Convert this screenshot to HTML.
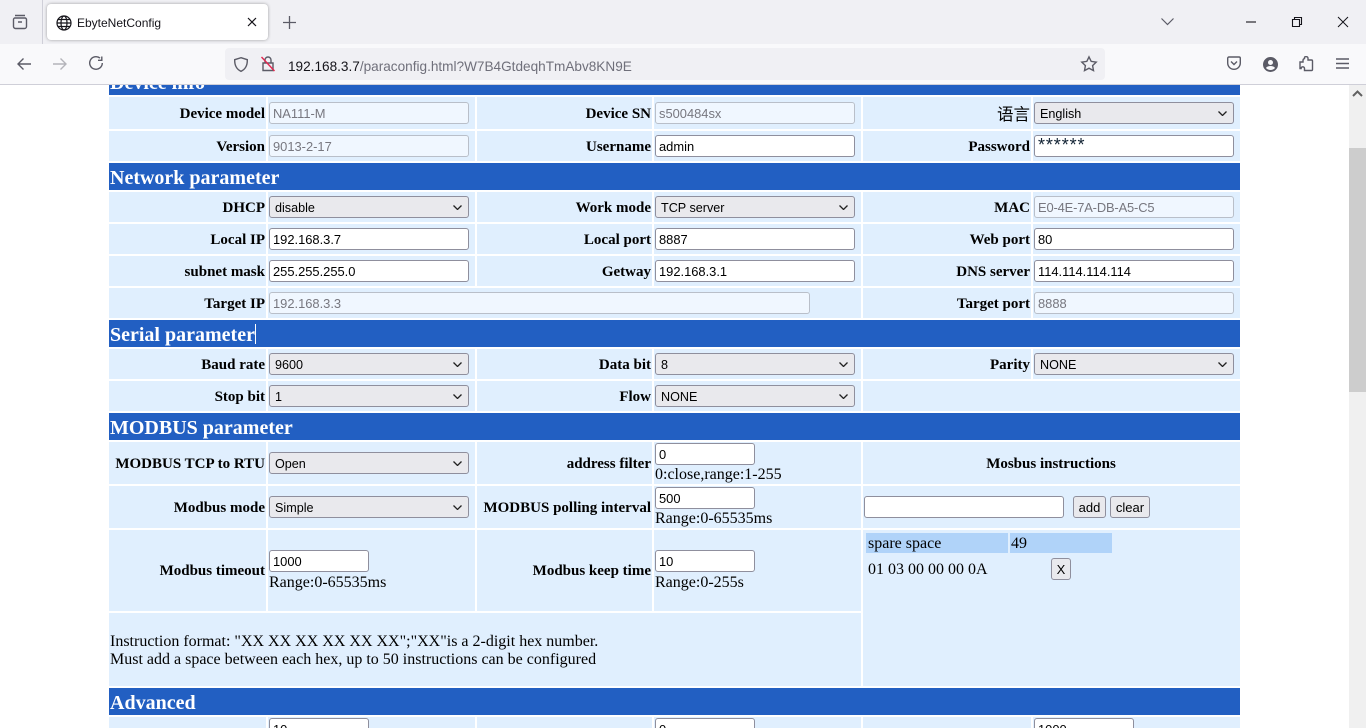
<!DOCTYPE html>
<html lang="en"><head><meta charset="utf-8"><title>EbyteNetConfig</title>
<style>
*{box-sizing:border-box}
html,body{margin:0;padding:0;width:1366px;height:728px;overflow:hidden;background:#fff}
body{position:relative;font-family:"Liberation Serif","Noto Serif CJK SC",serif;font-size:16px;color:#000}
#title{position:absolute;left:0;top:0;width:1366px;height:44px;background:#f0f0f4}
#tb{position:absolute;left:0;top:44px;width:1366px;height:41px;background:#f9f9fb;border-bottom:1px solid #cfcfd8}
#sep{position:absolute;left:42px;top:0;width:1px;height:44px;background:#cfcfd8}
#tab{position:absolute;left:47px;top:4px;width:221px;height:36px;background:#fff;border-radius:4px;box-shadow:0 0 3px rgba(0,0,0,.35)}
#tabt{position:absolute;left:30px;top:1px;font:12px/37px "Liberation Sans",sans-serif;color:#15141a}
#url{position:absolute;left:225px;top:4px;width:880px;height:32px;background:#f0f0f4;border-radius:4px}
#urlt{position:absolute;left:63px;top:2px;font:13.6px/33px "Liberation Sans",sans-serif;color:#6f6f7a;white-space:nowrap}
#urlt b{font-weight:400;color:#15141a}
svg.i{position:absolute;overflow:visible;fill:none;stroke:#5b5b66;stroke-width:1.4}
#page{position:absolute;left:0;top:85px;width:1349px;height:643px;overflow:hidden;background:#fff}
#in{position:absolute;left:0;top:-85px;width:1349px;height:728px;overflow:hidden}
#sb{position:absolute;left:1349px;top:85px;width:17px;height:643px;background:#f0f0f0}
#th{position:absolute;left:0;top:63px;width:17px;height:244px;background:#cdcdcd}
.h{position:absolute;left:109px;width:1131px;height:27px;background:#225fc2;color:#fff;font-weight:700;font-size:20px;line-height:31px;padding-left:1px;white-space:nowrap;overflow:hidden}
.c{position:absolute;background:#e0effe;display:flex;align-items:center;white-space:nowrap}
.l{justify-content:flex-end;padding-right:1px;padding-top:2px;font-weight:700;font-size:15px}
.f,.s,.b{position:absolute;margin:0;height:22px;width:200px;border:1px solid #8f8f9d;border-radius:3px;background:#fff;color:#000;font:12.9px "Liberation Sans",sans-serif;padding:1px 3px 0;outline:0}
.f.n{width:100px}
.f[disabled]{background:#f0f7ff;border-color:#b9bfc9;color:#77777f}
.s{-webkit-appearance:none;appearance:none;background:#e9e9ed;padding:2px 0 0 5px;font-size:12.6px}
.b{background:#e9e9ed;padding:0;text-align:center;font-size:13px;color:#000}
.v{position:absolute;left:0;top:0;width:9px;height:5px;fill:none;stroke:#222;stroke-width:1.3}
.t{position:absolute;white-space:nowrap;line-height:18px}
</style></head><body>
<div id="title">
<div id="sep"></div>
<svg class="i" style="left:12px;top:14px" width="16" height="16" viewBox="0 0 16 16"><path d="M3 1.500h10M1.500 5.500a1.500 1.500 0 0 1 1.500-1.500h10a1.500 1.500 0 0 1 1.500 1.500v7a2 2 0 0 1-2 2h-9a2 2 0 0 1-2-2zM6 8h4"/></svg>
<div id="tab">
<svg class="i" style="left:9px;top:11px;stroke:#15141a;stroke-width:1.2" width="16" height="16" viewBox="0 0 16 16"><circle cx="8" cy="8" r="7"/><ellipse cx="8" cy="8" rx="3" ry="7"/><path d="M1 8h14M2 4.500h12M2 11.500h12"/></svg>
<div id="tabt">EbyteNetConfig</div>
<svg class="i" style="left:200px;top:13px;stroke:#15141a;stroke-width:1.2" width="10" height="10" viewBox="0 0 10 10"><path d="M1 1l8 8M9 1l-8 8"/></svg>
</div>
<svg class="i" style="left:283px;top:16px;stroke-width:1.3" width="13" height="13" viewBox="0 0 13 13"><path d="M6.500 0v13M0 6.500h13"/></svg>
<svg class="i" style="left:1161px;top:18px;stroke-width:1.2" width="13" height="7" viewBox="0 0 13 7"><path d="M.5.500l6 6 6-6"/></svg>
<svg class="i" style="left:1246px;top:21px;stroke:#15141a;stroke-width:1.1" width="10" height="2"><path d="M0 1h10"/></svg>
<svg class="i" style="left:1292px;top:17px;stroke:#15141a;stroke-width:1.1" width="10" height="10" viewBox="0 0 10 10"><path d="M.5 2.500h7v7h-7zM2.500 2.500v-2h7v7h-2"/></svg>
<svg class="i" style="left:1338px;top:17px;stroke:#15141a;stroke-width:1" width="10" height="10" viewBox="0 0 10 10"><path d="M0 0l10 10M10 0L0 10"/></svg>
</div>
<div id="tb">
<svg class="i" style="left:17px;top:13px" width="14" height="14" viewBox="0 0 14 14"><path d="M14 7H1M6.500 1.500L1 7l5.500 5.500"/></svg>
<svg class="i" style="left:53px;top:13px;stroke:#b4b4ba" width="14" height="14" viewBox="0 0 14 14"><path d="M0 7h13M7.500 1.500L13 7l-5.500 5.500"/></svg>
<svg class="i" style="left:89px;top:12px" width="14" height="14" viewBox="0 0 14 14"><path d="M13.300 7A6.300 6.300 0 1 1 11 2.100M12.800.5v3.800H9"/></svg>
<div id="url">
<svg class="i" style="left:9px;top:9px" width="14" height="15" viewBox="0 0 14 15"><path d="M7 .7L13.300 2.700C13.500 9 11 12.500 7 14.300 3 12.500.5 9 .7 2.700z"/></svg>
<svg class="i" style="left:36px;top:8px" width="14" height="16" viewBox="0 0 14 16"><path d="M2 7h10v7.500H2zM4 7V4a3 3 0 0 1 6 0v3"/><path d="M.5 1L13.500 15" stroke="#e22850"/></svg>
<div id="urlt"><b>192.168.3.7</b>/paraconfig.html?W7B4GtdeqhTmAbv8KN9E</div>
<svg class="i" style="left:856px;top:8px" width="16" height="16" viewBox="0 0 16 16"><path d="M8 .9l2.200 4.500 5 .7-3.600 3.500.9 5L8 12.200l-4.500 2.400.9-5L.8 6.100l5-.7z"/></svg>
</div>
<svg class="i" style="left:1227px;top:12px" width="14" height="14" viewBox="0 0 14 14"><path d="M2 1h10a1.300 1.300 0 0 1 1.300 1.300V7a6.300 6.300 0 0 1-12.600 0V2.300A1.300 1.300 0 0 1 2 1zM4 5.500l3 3 3-3"/></svg>
<svg class="i" style="left:1263px;top:13px;stroke:none;fill:#5b5b66" width="15" height="15" viewBox="0 0 15 15"><path fill-rule="evenodd" d="M7.500 0a7.500 7.500 0 1 0 0 15 7.500 7.500 0 0 0 0-15zm0 3a2.500 2.500 0 1 1 0 5 2.500 2.500 0 0 1 0-5zM3 11c.8-1.500 2.500-2 4.500-2s3.700.5 4.500 2a6 6 0 0 1-9 0z"/></svg>
<svg class="i" style="left:1299px;top:12px" width="14" height="15" viewBox="0 0 14 15"><path d="M1 6h3V4.500a2 2 0 0 1 1.500-1.900V1.500A1 1 0 0 1 6.500.7h1a1.500 1.500 0 0 1 1.500 1.500V4h3.500a1 1 0 0 1 1 1v8.500a1 1 0 0 1-1 1H5.500V12.500a1.700 1.700 0 0 0-3.400 0H1z"/></svg>
<svg class="i" style="left:1336px;top:14px" width="13" height="11" viewBox="0 0 13 11"><path d="M0 1h13M0 5.500h13M0 10h13"/></svg>
</div>

<div id="page"><div id="in">
<div class="h" style="top:68px">Device info</div>
<div class="c l" style="left:109px;top:97px;width:157px;height:32px">Device model</div>
<div class="c" style="left:268px;top:97px;width:207px;height:32px"></div>
<div class="c l" style="left:477px;top:97px;width:175px;height:32px">Device SN</div>
<div class="c" style="left:654px;top:97px;width:207px;height:32px"></div>
<div class="c l" style="left:863px;top:97px;width:168px;height:32px;padding-top:0;font-weight:400;font-size:16.5px;font-family:'Noto Sans CJK SC',sans-serif">语言</div>
<div class="c" style="left:1033px;top:97px;width:207px;height:32px"></div>
<input class="f" disabled value="NA111-M" style="left:269px;top:102px">
<input class="f" disabled value="s500484sx" style="left:655px;top:102px">
<select class="s" style="left:1034px;top:102px"><option>English</option></select>

<div class="c l" style="left:109px;top:131px;width:157px;height:30px">Version</div>
<div class="c" style="left:268px;top:131px;width:207px;height:30px"></div>
<div class="c l" style="left:477px;top:131px;width:175px;height:30px">Username</div>
<div class="c" style="left:654px;top:131px;width:207px;height:30px"></div>
<div class="c l" style="left:863px;top:131px;width:168px;height:30px">Password</div>
<div class="c" style="left:1033px;top:131px;width:207px;height:30px"></div>
<input class="f" disabled value="9013-2-17" style="left:269px;top:135px">
<input class="f" value="admin" style="left:655px;top:135px">
<input class="f" value="******" style="left:1034px;top:135px;font-size:18px;letter-spacing:.9px;color:#123;padding:0 3px 2px">

<div class="h" style="top:163px">Network parameter</div>
<div class="c l" style="left:109px;top:192px;width:157px;height:30px">DHCP</div>
<div class="c" style="left:268px;top:192px;width:207px;height:30px"></div>
<div class="c l" style="left:477px;top:192px;width:175px;height:30px">Work mode</div>
<div class="c" style="left:654px;top:192px;width:207px;height:30px"></div>
<div class="c l" style="left:863px;top:192px;width:168px;height:30px">MAC</div>
<div class="c" style="left:1033px;top:192px;width:207px;height:30px"></div>
<select class="s" style="left:269px;top:196px"><option>disable</option></select>
<select class="s" style="left:655px;top:196px"><option>TCP server</option></select>
<input class="f" disabled value="E0-4E-7A-DB-A5-C5" style="left:1034px;top:196px;letter-spacing:-.15px">

<div class="c l" style="left:109px;top:224px;width:157px;height:30px">Local IP</div>
<div class="c" style="left:268px;top:224px;width:207px;height:30px"></div>
<div class="c l" style="left:477px;top:224px;width:175px;height:30px">Local port</div>
<div class="c" style="left:654px;top:224px;width:207px;height:30px"></div>
<div class="c l" style="left:863px;top:224px;width:168px;height:30px">Web port</div>
<div class="c" style="left:1033px;top:224px;width:207px;height:30px"></div>
<input class="f" value="192.168.3.7" style="left:269px;top:228px">
<input class="f" value="8887" style="left:655px;top:228px">
<input class="f" value="80" style="left:1034px;top:228px">

<div class="c l" style="left:109px;top:256px;width:157px;height:30px">subnet mask</div>
<div class="c" style="left:268px;top:256px;width:207px;height:30px"></div>
<div class="c l" style="left:477px;top:256px;width:175px;height:30px">Getway</div>
<div class="c" style="left:654px;top:256px;width:207px;height:30px"></div>
<div class="c l" style="left:863px;top:256px;width:168px;height:30px">DNS server</div>
<div class="c" style="left:1033px;top:256px;width:207px;height:30px"></div>
<input class="f" value="255.255.255.0" style="left:269px;top:260px">
<input class="f" value="192.168.3.1" style="left:655px;top:260px">
<input class="f" value="114.114.114.114" style="left:1034px;top:260px">

<div class="c l" style="left:109px;top:288px;width:157px;height:30px">Target IP</div>
<div class="c" style="left:268px;top:288px;width:593px;height:30px"></div>
<div class="c l" style="left:863px;top:288px;width:168px;height:30px">Target port</div>
<div class="c" style="left:1033px;top:288px;width:207px;height:30px"></div>
<input class="f" disabled value="192.168.3.3" style="left:269px;top:292px;width:541px">
<input class="f" disabled value="8888" style="left:1034px;top:292px">

<div class="h" style="top:320px">Serial parameter</div>
<div style="position:absolute;left:255px;top:324px;width:1px;height:20px;background:#fff"></div>
<div class="c l" style="left:109px;top:349px;width:157px;height:30px">Baud rate</div>
<div class="c" style="left:268px;top:349px;width:207px;height:30px"></div>
<div class="c l" style="left:477px;top:349px;width:175px;height:30px">Data bit</div>
<div class="c" style="left:654px;top:349px;width:207px;height:30px"></div>
<div class="c l" style="left:863px;top:349px;width:168px;height:30px">Parity</div>
<div class="c" style="left:1033px;top:349px;width:207px;height:30px"></div>
<select class="s" style="left:269px;top:353px"><option>9600</option></select>
<select class="s" style="left:655px;top:353px"><option>8</option></select>
<select class="s" style="left:1034px;top:353px"><option>NONE</option></select>

<div class="c l" style="left:109px;top:381px;width:157px;height:30px">Stop bit</div>
<div class="c" style="left:268px;top:381px;width:207px;height:30px"></div>
<div class="c l" style="left:477px;top:381px;width:175px;height:30px">Flow</div>
<div class="c" style="left:654px;top:381px;width:207px;height:30px"></div>
<div class="c" style="left:863px;top:381px;width:377px;height:30px"></div>
<select class="s" style="left:269px;top:385px"><option>1</option></select>
<select class="s" style="left:655px;top:385px"><option>NONE</option></select>

<div class="h" style="top:413px">MODBUS parameter</div>
<div class="c l" style="left:109px;top:442px;width:157px;height:42px">MODBUS TCP to RTU</div>
<div class="c" style="left:268px;top:442px;width:207px;height:42px"></div>
<div class="c l" style="left:477px;top:442px;width:175px;height:42px">address filter</div>
<div class="c" style="left:654px;top:442px;width:207px;height:42px"></div>
<div class="c l" style="left:863px;top:442px;width:377px;height:42px;justify-content:center">Mosbus instructions</div>
<select class="s" style="left:269px;top:452px"><option>Open</option></select>
<input class="f n" value="0" style="left:655px;top:443px">
<div class="t" style="left:655px;top:466px">0:close,range:1-255</div>

<div class="c l" style="left:109px;top:486px;width:157px;height:42px">Modbus mode</div>
<div class="c" style="left:268px;top:486px;width:207px;height:42px"></div>
<div class="c l" style="left:477px;top:486px;width:175px;height:42px">MODBUS polling interval</div>
<div class="c" style="left:654px;top:486px;width:207px;height:42px"></div>
<div class="c" style="left:863px;top:486px;width:377px;height:42px"></div>
<select class="s" style="left:269px;top:496px"><option>Simple</option></select>
<input class="f n" value="500" style="left:655px;top:487px">
<div class="t" style="left:655px;top:510px">Range:0-65535ms</div>
<input class="f" style="left:864px;top:496px">
<button class="b" style="left:1073px;top:496px;width:33px">add</button>
<button class="b" style="left:1110px;top:496px;width:40px">clear</button>

<div class="c l" style="left:109px;top:530px;width:157px;height:81px">Modbus timeout</div>
<div class="c" style="left:268px;top:530px;width:207px;height:81px"></div>
<div class="c l" style="left:477px;top:530px;width:175px;height:81px">Modbus keep time</div>
<div class="c" style="left:654px;top:530px;width:207px;height:81px"></div>
<input class="f n" value="1000" style="left:269px;top:550px">
<div class="t" style="left:269px;top:574px">Range:0-65535ms</div>
<input class="f n" value="10" style="left:655px;top:550px">
<div class="t" style="left:655px;top:574px">Range:0-255s</div>

<div class="c" style="left:863px;top:530px;width:377px;height:156px"></div>
<div class="t" style="left:866px;top:533px;width:142px;height:20px;background:#b0d3f9;line-height:22px;padding-left:2px">spare space</div>
<div class="t" style="left:1010px;top:533px;width:102px;height:20px;background:#b0d3f9;line-height:22px;padding-left:1px">49</div>
<div class="t" style="left:868px;top:561px">01 03 00 00 00 0A</div>
<button class="b" style="left:1051px;top:558px;width:20px">X</button>

<div class="c" style="left:109px;top:613px;width:752px;height:73px"></div>
<div class="t" style="left:110px;top:633px">Instruction format: "XX XX XX XX XX XX";"XX"is a 2-digit hex number.<br>Must add a space between each hex, up to 50 instructions can be configured</div>

<div class="h" style="top:688px">Advanced</div>
<div class="c" style="left:109px;top:717px;width:157px;height:11px"></div>
<div class="c" style="left:268px;top:717px;width:207px;height:11px"></div>
<div class="c" style="left:477px;top:717px;width:175px;height:11px"></div>
<div class="c" style="left:654px;top:717px;width:207px;height:11px"></div>
<div class="c" style="left:863px;top:717px;width:168px;height:11px"></div>
<div class="c" style="left:1033px;top:717px;width:207px;height:11px"></div>
<input class="f n" value="10" style="left:269px;top:718px">
<input class="f n" value="0" style="left:655px;top:718px">
<input class="f n" value="1000" style="left:1034px;top:718px">

<svg class="v" style="left:453px;top:205px" viewBox="0 0 9 5"><path d="M.5.500l4 4 4-4"/></svg>
<svg class="v" style="left:839px;top:205px" viewBox="0 0 9 5"><path d="M.5.500l4 4 4-4"/></svg>
<svg class="v" style="left:1218px;top:111px" viewBox="0 0 9 5"><path d="M.5.500l4 4 4-4"/></svg>
<svg class="v" style="left:453px;top:362px" viewBox="0 0 9 5"><path d="M.5.500l4 4 4-4"/></svg>
<svg class="v" style="left:839px;top:362px" viewBox="0 0 9 5"><path d="M.5.500l4 4 4-4"/></svg>
<svg class="v" style="left:1218px;top:362px" viewBox="0 0 9 5"><path d="M.5.500l4 4 4-4"/></svg>
<svg class="v" style="left:453px;top:394px" viewBox="0 0 9 5"><path d="M.5.500l4 4 4-4"/></svg>
<svg class="v" style="left:839px;top:394px" viewBox="0 0 9 5"><path d="M.5.500l4 4 4-4"/></svg>
<svg class="v" style="left:453px;top:461px" viewBox="0 0 9 5"><path d="M.5.500l4 4 4-4"/></svg>
<svg class="v" style="left:453px;top:505px" viewBox="0 0 9 5"><path d="M.5.500l4 4 4-4"/></svg>
</div></div>
<div id="sb"><svg style="position:absolute;left:3px;top:5px" width="11" height="7" viewBox="0 0 11 7"><path d="M1 6l4.500-4.500L10 6" fill="none" stroke="#606060" stroke-width="2"/></svg><div id="th"></div></div>
</body></html>
